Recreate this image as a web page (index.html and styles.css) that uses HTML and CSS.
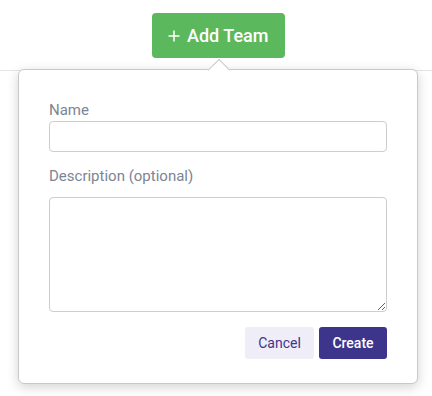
FILE: index.html
```html
<!DOCTYPE html>
<html lang="en">
<head>
    <meta charset="UTF-8">
    <meta name="viewport" content="width=device-width, initial-scale=1.0">
    <title>Add Team</title>
    <link rel="stylesheet" href="styles.css">
</head>
<body>
    <header class="toolbar">
        <button class="btn-add" type="button">
            <svg class="plus" width="12" height="12" viewBox="0 0 12 12">
                <path d="M6 0.5V11.5M0.5 6H11.5" stroke="#fff" stroke-width="1.5" fill="none"/>
            </svg>
            Add Team
        </button>
    </header>

    <!-- Popover pour créer une équipe -->
    <div class="popover">
        <span class="arrow"></span>
        <form class="team-form">
            <label class="field-label" for="name">Name</label>
            <input class="field-input" id="name" type="text">

            <label class="field-label desc-label" for="desc">Description (optional)</label>
            <textarea class="field-area" id="desc"></textarea>

            <div class="actions">
                <button class="btn btn-cancel" type="button">Cancel</button>
                <button class="btn btn-create" type="button">Create</button>
            </div>
        </form>
    </div>
</body>
</html>
```

FILE: styles.css
```css
body {
  margin: 0;
  background: #fff;
  font-family: Roboto, "Liberation Sans", sans-serif;
}

/* Barre du haut */
.toolbar {
  height: 71px;
  border-bottom: 1px solid #e6e6e6;
  box-sizing: border-box;
  padding: 13px 0 0 152px;
}

.btn-add {
  display: flex;
  align-items: center;
  gap: 7px;
  height: 45px;
  width: 133px;
  padding: 0 0 0 16px;
  border: none;
  border-radius: 4px;
  background: #5cb85c;
  color: #fff;
  font-family: inherit;
  font-size: 18px;
  font-weight: 500;
  cursor: pointer;
}

.plus {
  flex: none;
}

/* Popover */
.popover {
  position: absolute;
  left: 18px;
  top: 69px;
  width: 400px;
  height: 315px;
  box-sizing: border-box;
  background: #fff;
  border: 1px solid #c9c9c9;
  border-radius: 6px;
  box-shadow: 0 3px 12px rgba(0, 0, 0, 0.18);
  padding: 30px 30px 0 30px;
}

.arrow {
  position: absolute;
  left: 192px;
  top: -8px;
  width: 15px;
  height: 15px;
  background: #fff;
  border-top: 1px solid #c9c9c9;
  border-left: 1px solid #c9c9c9;
  transform: rotate(45deg);
}

.team-form {
  display: flex;
  flex-direction: column;
}

.field-label {
  font-size: 15px;
  line-height: 20px;
  color: #7b8594;
  margin-bottom: 1px;
}

.desc-label {
  margin-top: 14px;
  margin-bottom: 11px;
}

.field-input,
.field-area {
  box-sizing: border-box;
  width: 338px;
  border: 1px solid #cdcdcd;
  border-radius: 4px;
  font-family: inherit;
  font-size: 14px;
  padding: 6px 10px;
  margin: 0;
}

.field-input {
  height: 31px;
}

.field-area {
  height: 115px;
  resize: vertical;
}

.actions {
  display: flex;
  justify-content: flex-end;
  gap: 5px;
  margin-top: 15px;
}

.btn {
  height: 32px;
  border: none;
  border-radius: 3px;
  font-family: inherit;
  font-size: 14px;
  cursor: pointer;
}

.btn-cancel {
  width: 69px;
  background: #efedf8;
  color: #3d348b;
}

.btn-create {
  width: 68px;
  background: #3d348b;
  color: #fff;
  font-weight: 500;
}
```
